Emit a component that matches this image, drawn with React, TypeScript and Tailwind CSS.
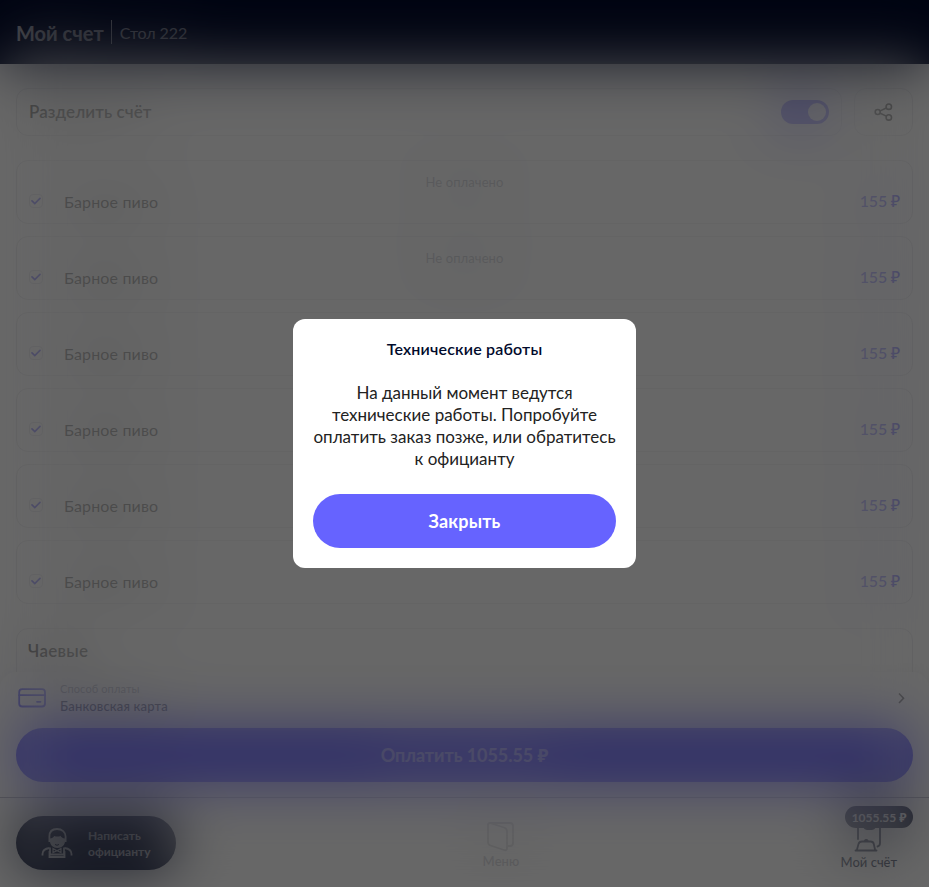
type Order = { name: string; price: string; status?: string };

const orders: Order[] = [
  { name: "Барное пиво", price: "155 ₽", status: "Не оплачено" },
  { name: "Барное пиво", price: "155 ₽", status: "Не оплачено" },
  { name: "Барное пиво", price: "155 ₽" },
  { name: "Барное пиво", price: "155 ₽" },
  { name: "Барное пиво", price: "155 ₽" },
  { name: "Барное пиво", price: "155 ₽" },
];

function Header() {
  return (
    <header className="flex h-16 shrink-0 items-center bg-[#010a2c] px-4 pt-0.5 text-white">
      <h1 className="text-xl font-bold">Мой счет</h1>
      <span className="mr-2 ml-[7px] -mt-0.5 h-6 w-px bg-white" />
      <span className="-mt-px text-base tracking-[-0.1px]">Стол 222</span>
    </header>
  );
}

function ShareIcon() {
  return (
    <svg width="20" height="20" viewBox="0 0 20 20" fill="none" stroke="#222" strokeWidth="1.6">
      <circle cx="3.7" cy="10" r="2.5" />
      <circle cx="14.8" cy="4.7" r="2.7" />
      <circle cx="14.8" cy="15.400" r="2.7" />
      <path d="M6.200 8.900 12.300 6M6.200 11.200l6.100 2.900" />
    </svg>
  );
}

function SplitRow() {
  return (
    <div className="flex gap-3">
      <div className="flex h-12 flex-1 items-center justify-between rounded-xl border border-[#e3e3e7] px-3">
        <span className="text-[17px] font-semibold tracking-[0.07px] text-[#222]">Разделить счёт</span>
        <span className="flex h-6 w-12 items-center justify-end rounded-full bg-[#6663ff] p-[3px]">
          <span className="size-[18.5px] rounded-full bg-white" />
        </span>
      </div>
      <div className="flex h-12 w-[59px] items-center justify-center rounded-xl border border-[#e3e3e7]">
        <ShareIcon />
      </div>
    </div>
  );
}

function OrderRow({ name, price, status }: Order) {
  return (
    <li className="grid h-16 grid-rows-[40px_1fr] rounded-xl border border-[#e3e3e7] px-3">
      <div className="flex items-center justify-center pt-1 text-[13px] tracking-[0.1px] text-[#7b7e90]">{status}</div>
      <div className="-mt-[11px] flex h-[22px] items-center">
        <span className="flex size-3.5 items-center justify-center rounded-[4px] border border-[#d8d8e0]">
          <svg width="10" height="8" viewBox="0 0 10 8" fill="none" stroke="#3b36ff" strokeWidth="1.7" strokeLinecap="round">
            <path d="m1 3.8 2.8 2.7L9 1.3" />
          </svg>
        </span>
        <span className="ml-[21px] mt-0.5 flex-1 text-base tracking-[0.14px] text-black">{name}</span>
        <span className="text-base font-medium tracking-[-0.2px] text-[#3f3aff]">{price}</span>
      </div>
    </li>
  );
}

function PaymentPanel() {
  return (
    <section className="relative -mt-4 h-[126px] shrink-0 rounded-t-2xl border-b border-[#b9b9c4] bg-white px-4 pt-[9px] shadow-[0_-4px_12px_rgba(0,0,0,0.04)]">
      <div className="flex h-[34px] items-center">
        <svg width="32" height="24" viewBox="0 0 32 24" fill="none" stroke="#4f4bff" strokeWidth="1.8" strokeLinecap="round">
          <rect x="3.2" y="3.2" width="25.8" height="17.3" rx="3" />
          <path d="M3.2 9.2H29M21 15.8h3.5" />
        </svg>
        <div className="ml-3 flex-1">
          <p className="-mt-px text-[11px] leading-[17px] tracking-[0.12px] text-[#7b7e90]">Способ оплаты</p>
          <p className="mt-px text-[13px] font-medium leading-[17px] tracking-[0.18px] text-[#010a2c]">Банковская карта</p>
        </div>
        <svg className="mr-2" width="8" height="12" viewBox="0 0 8 12" fill="none" stroke="#444" strokeWidth="1.6">
          <path d="m2 1.5 4.5 4.7L2 11" />
        </svg>
      </div>
      <button className="mt-[13px] flex h-[54px] w-full items-center justify-center rounded-full bg-[#6663ff] text-lg font-bold tracking-[-0.05px] text-white">
        Оплатить 1055.55 ₽
      </button>
    </section>
  );
}

function WaiterIcon() {
  return (
    <svg width="32" height="32" viewBox="0 0 32 32" fill="none" stroke="white" strokeWidth="1.8">
      <path d="M8.4 15V9.5C8.4 5 11 2 16 2s8.600 3 8.600 7.500V15" />
      <path d="M9 11.500c2-.4 3.200-1.200 4.300-2.600 2 .9 4.800.9 6-.2 1 1.600 2.200 2.400 4.700 2.800v2.500c0 4-3 7-7.500 7S9 18 9 14Z" fill="white" stroke="none" />
      <path d="M1.500 28.500v-1.500c0-3.600 3.500-5.500 7-6M30.500 28.500v-1.500c0-3.600-3.500-5.500-7-6" />
      <path d="M9 20.500v7h14v-7M8.500 24v6h15v-6" />
      <path d="m12 21.500 4 2.200 4-2.200v4l-4-1.800-4 1.800Z" strokeWidth="1.200" />
      <path d="M14 17.500q2 1.500 4 0" stroke="#010a2c" strokeWidth="1" />
    </svg>
  );
}

function BottomBar() {
  return (
    <nav className="grid h-[89px] shrink-0 grid-cols-3 bg-white px-4">
      <button className="mt-[18px] flex h-[54px] w-40 items-center rounded-full bg-[#010a2c] pl-[25px] text-left text-xs font-bold leading-4 text-white">
        <WaiterIcon />
        <span className="ml-[15px] pt-0.5">
          Написать
          <br />
          официанту
        </span>
      </button>
      <div className="ml-[73px] flex flex-col items-center justify-self-center self-start pt-[22px] text-[13px] font-medium text-[#b0b0ba]">
        <svg width="32" height="34" viewBox="0 0 32 34" fill="none" stroke="#bcbcc4" strokeWidth="1.8" strokeLinejoin="round">
          <path d="M5 3h20q3 0 3 3v17q0 3-3 3h-2.500M5 3 19 7.500q3 1 3 4V28q0 3-3 2L5.500 25.500Q3 24.700 3 22V5q0-2 2-2Z" />
        </svg>
        <span className="-mt-0.5 leading-[18px] tracking-[0.1px]">Меню</span>
      </div>
      <div className="relative mr-4 flex flex-col items-center justify-self-end self-start pt-5 text-[13px] font-medium text-[#010a2c]">
        <svg width="32" height="36" viewBox="0 0 32 36" fill="none" stroke="#010a2c" strokeWidth="1.800" strokeLinecap="round">
          <path d="M5 21V6q0-3 3-3h16q3 0 3 3v19q0 3-2.500 3.500M11 9q1 2 3 2h5q2 0 3-2" />
          <path d="M2.500 32.500h21M4 31.500l1.500-5.500Q6.200 23.500 9 23.500h8.500q2.800 0 3.300 2.500L22 31.500M11.500 23q1.700-2 3.500 0" />
        </svg>
        <span className="-mt-px leading-[18px]">Мой счёт</span>
        <span className="absolute -right-4 top-2 flex h-[22px] w-[68px] items-center justify-center rounded-full bg-[#010a2c] pt-px text-xs font-bold text-white">
          1055.55 ₽
        </span>
      </div>
    </nav>
  );
}

function MaintenanceDialog() {
  return (
    <div role="dialog" className="relative w-[343px] rounded-xl bg-white p-5 text-center">
      <h2 className="text-base font-semibold leading-5 tracking-[0.18px] text-[#010a2c]">Технические работы</h2>
      <p className="mt-[23px] whitespace-nowrap text-[17px] leading-[22px] text-[#222]">
        На данный момент ведутся
        <br />
        технические работы. Попробуйте
        <br />
        оплатить заказ позже, или обратитесь
        <br />к официанту
      </p>
      <button className="mt-6 flex h-[54px] w-full items-center justify-center rounded-full bg-[#6663ff] text-lg font-bold tracking-[0.15px] text-white">
        Закрыть
      </button>
    </div>
  );
}

export default function App() {
  return (
    <div className="relative h-[887px] w-full overflow-hidden bg-white font-[Lato,'Noto_Sans',sans-serif]">
      <div className="flex h-full flex-col">
        <Header />
        <main className="min-h-0 flex-1 overflow-hidden px-4 pt-6">
          <SplitRow />
          <ul className="mt-6 flex flex-col gap-3">
            {orders.map((order, i) => (
              <OrderRow key={i} {...order} />
            ))}
          </ul>
          <section className="mt-6 h-40 rounded-xl border border-[#e3e3e7] px-[11px] pt-[11px]">
            <h2 className="text-[17px] font-semibold leading-[22px] tracking-[0.25px] text-black">Чаевые</h2>
          </section>
        </main>
        <PaymentPanel />
        <BottomBar />
      </div>
      <div className="absolute inset-0 flex items-center justify-center">
        <div className="absolute inset-0 bg-black/79 opacity-[0.76] backdrop-blur-[28px]" />
        <MaintenanceDialog />
      </div>
    </div>
  );
}
